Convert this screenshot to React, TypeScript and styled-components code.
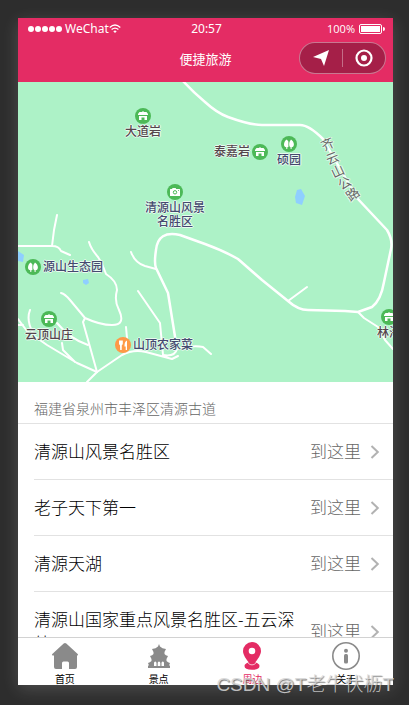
import React from "react";
import styled, { createGlobalStyle, css } from "styled-components";

const GlobalStyle = createGlobalStyle`
  *, *::before, *::after { box-sizing: border-box; }
  body {
    margin: 0;
    background: #2d2d2d;
    font-family: "Noto Sans", "Noto Sans CJK SC", sans-serif;
  }
  button { margin: 0; padding: 0; border: 0; background: none; font: inherit; color: inherit; cursor: pointer; }
`;

const Stage = styled.div`
  height: 100vh;
  padding: 18px 16px 20px 18px;
  position: relative;
  overflow: hidden;
`;

const Phone = styled.div`
  height: 100%;
  display: flex;
  flex-direction: column;
  background: #fff;
  box-shadow: 0 4px 16px 0 rgba(255, 255, 255, 0.16);
`;

const Header = styled.header`
  flex: none;
  background: #e42c64;
  color: #fff;
`;

const StatusBar = styled.div`
  display: grid;
  grid-template-columns: 1fr auto 1fr;
  align-items: center;
  height: 22px;
  padding: 0 8px 0 10px;
  font-size: 12px;
  line-height: 20px;
`;

const Carrier = styled.div`
  display: flex;
  align-items: center;
`;

const Dots = styled.span`
  display: flex;
  gap: 1px;
  margin-right: 3px;
`;

const Dot = styled.i`
  width: 6px;
  height: 6px;
  border-radius: 50%;
  background: #fff;
`;

const Power = styled.div`
  display: flex;
  align-items: center;
  justify-content: flex-end;
  gap: 4px;
  font-size: 11px;
  font-family: "Open Sans", sans-serif;
`;

const NavBar = styled.div`
  display: grid;
  grid-template-columns: 1fr auto 1fr;
  align-items: center;
  height: 42px;
  padding: 0 7px 6px;
`;

const Title = styled.h1`
  grid-column: 2;
  margin: 0;
  padding-top: 2px;
  font-size: 13px;
  line-height: 20px;
  font-weight: 400;
`;

const Capsule = styled.div`
  justify-self: end;
  display: flex;
  align-items: center;
  width: 87px;
  height: 32px;
  border: 1px solid rgba(255, 255, 255, 0.4);
  border-radius: 16px;
  background: #a51f48;
`;

const CapsuleButton = styled.button`
  flex: 1;
  height: 18px;
  display: flex;
  align-items: center;
  justify-content: center;
  & + & { border-left: 1px solid rgba(255, 255, 255, 0.35); }
`;

const Map = styled.section`
  position: relative;
  flex: none;
  height: 300px;
  overflow: hidden;
  background: #adf2c7;
`;

const Roads = styled.svg`
  display: block;
`;

const Pin = styled.div<{ $x: number; $y: number; $side?: "left" | "right" }>`
  position: absolute;
  left: ${(p) => p.$x}px;
  top: ${(p) => p.$y}px;
  display: flex;
  flex-direction: ${(p) => (p.$side === "right" ? "row" : p.$side === "left" ? "row-reverse" : "column")};
  align-items: center;
  gap: ${(p) => (p.$side ? 2 : 1)}px;
  svg { flex: none; display: block; }
`;

const outline = css`
  text-shadow: 1px 0 #e8fbef, -1px 0 #e8fbef, 0 1px #e8fbef, 0 -1px #e8fbef;
`;

const PinLabel = styled.span<{ $tone: string }>`
  ${outline}
  color: ${(p) => p.$tone};
  font-size: 12px;
  line-height: 14px;
  font-weight: 500;
  text-align: center;
  white-space: pre;
`;

const RoadGlyph = styled.span<{ $x: number; $y: number; $turn: number }>`
  ${outline}
  position: absolute;
  left: ${(p) => p.$x}px;
  top: ${(p) => p.$y}px;
  color: #666;
  font-size: 13px;
  line-height: 14px;
  transform: rotate(${(p) => p.$turn}deg);
`;

const Results = styled.main`
  flex: 1;
  min-height: 0;
  overflow: hidden;
`;

const Address = styled.h2`
  margin: 0;
  padding: 17px 16px 4px;
  font-size: 14px;
  line-height: 20px;
  font-weight: 300;
  color: #666;
  border-bottom: 1px solid #e2e2e2;
`;

const List = styled.ul`
  margin: 0;
  padding: 0;
  list-style: none;
`;

const Item = styled.li`
  margin-left: 16px;
  & + & { border-top: 1px solid #e2e2e2; }
`;

const Row = styled.button`
  display: flex;
  align-items: center;
  width: 100%;
  padding: 16px 13px 15px 0;
  font-size: 17px;
  line-height: 24px;
  font-weight: 300;
  text-align: left;
`;

const Place = styled.span`
  flex: 1;
  color: #000;
`;

const Go = styled.span`
  flex: none;
  display: flex;
  align-items: center;
  gap: 9px;
  padding-left: 9px;
  color: #666;
`;

const TabBar = styled.nav`
  flex: none;
  display: grid;
  grid-template-columns: repeat(4, 1fr);
  height: 48px;
  overflow: hidden;
  border-top: 1px solid #d2d2d2;
  background: #fff;
`;

const Tab = styled.button<{ $active?: boolean }>`
  display: flex;
  flex-direction: column;
  align-items: center;
  justify-content: flex-start;
  padding-top: 3px;
  font-size: 10px;
  line-height: 14px;
  color: ${(p) => (p.$active ? "#e42c64" : "#000")};
  svg { flex: none; display: block; margin-bottom: 1px; }
`;

const Watermark = styled.div`
  position: absolute;
  right: 15px;
  bottom: 6px;
  color: rgba(215, 215, 215, 0.85);
  font-family: "Liberation Sans", "Noto Sans CJK SC", sans-serif;
  font-size: 19px;
  line-height: 28px;
  font-weight: 300;
  white-space: nowrap;
  text-shadow: 1px 1px 1px rgba(60, 60, 60, 0.7);
  pointer-events: none;
`;

type Kind = "house" | "tree" | "camera" | "food";

const PinIcon = ({ kind }: { kind: Kind }) => (
  <svg width="16" height="16" viewBox="0 0 16 16" aria-hidden="true">
    <circle cx="8" cy="8" r="8" fill={kind === "food" ? "#ff9947" : "#4cb957"} />
    {kind === "house" && (
      <path d="M4.5 4H7v-.6h2V4h2.500L13 6v1H3V6zM4 8h8v4H9.500V9.600h-3V12H4z" fill="#fff" />
    )}
    {kind === "tree" && (
      <path d="M5.800 3.500C4.200 4.300 3 6.500 3 8.400c0 1.800 1 2.700 2.300 2.900V13h1v-1.700L7.400 11V5.500zM10 3.500C8.700 5 8.200 6.500 8.200 8.200c0 1.700.5 2.800 1.400 3.100V13h1v-1.700c1.400-.2 2.300-1.300 2.300-3.100C12.900 6.500 11.600 4.500 10 3.500z" fill="#fff" />
    )}
    {kind === "camera" && (
      <>
        <path d="M3.500 5H5l.6-1h3l.6 1h3.300q.5 0 .5.500v6q0 .5-.5.500h-9q-.5 0-.5-.5v-6q0-.5.5-.5z" fill="#fff" />
        <circle cx="8" cy="8.300" r="1.700" fill="none" stroke="#4cb957" />
        <circle cx="11.500" cy="6.500" r=".5" fill="#4cb957" />
      </>
    )}
    {kind === "food" && (
      <path d="M4 3.500h3.800v3.300q0 1-1 1.400L6.700 13H5.200L5 8.200q-1-.4-1-1.400zM9.500 8.500Q9.500 4.500 12 3.500V13h-1.300V9.500H9.500z" fill="#fff" />
    )}
  </svg>
);

const NAVY = "#45496f";
const BROWN = "#55454c";

const pins: { x: number; y: number; kind: Kind; text: string; tone: string; side?: "left" | "right" }[] = [
  { x: 107, y: 26, kind: "house", text: "大道岩", tone: BROWN },
  { x: 196, y: 62, kind: "house", text: "泰嘉岩", tone: BROWN, side: "left" },
  { x: 259, y: 54, kind: "tree", text: "硕园", tone: NAVY },
  { x: 127, y: 102, kind: "camera", text: "清源山风景\n名胜区", tone: NAVY },
  { x: 7, y: 177, kind: "tree", text: "源山生态园", tone: NAVY, side: "right" },
  { x: 7, y: 229, kind: "house", text: "云顶山庄", tone: BROWN },
  { x: 97, y: 255, kind: "food", text: "山顶农家菜", tone: NAVY, side: "right" },
  { x: 359, y: 227, kind: "house", text: "林海", tone: BROWN },
];

const roadName = [
  { c: "齐", x: 303, y: 55, turn: -25 },
  { c: "云", x: 308, y: 69, turn: -22 },
  { c: "山", x: 313, y: 82, turn: -25 },
  { c: "公", x: 320, y: 94, turn: -30 },
  { c: "路", x: 328, y: 105, turn: -36 },
];

const places = ["清源山风景名胜区", "老子天下第一", "清源天湖", "清源山国家重点风景名胜区-五云深处"];

const MapRoads = () => (
  <Roads width="375" height="300" viewBox="0 0 375 300" aria-hidden="true">
    <g fill="#8fcfff">
      <path d="M0 169l6 4-1 7-5-1zM65 198l5-1 1 4-3 2-3-2zM279 108l4-1 4 7-3 9-6-2-1-6z" />
    </g>
    <g fill="none" stroke="#fff" strokeWidth="2" strokeLinecap="round" strokeLinejoin="round">
      <path d="M0 164H34Q41 164 43 169L52 173M34 164L36 148L39 133" />
      <path d="M71 160Q73 167 80 175Q84 181 88 192Q99 199 99 208Q96 219 101 228Q108 243 94 243Q82 243 67 236L52 218Q47 212 43 211M67 236L65 240L79 290" />
      <path d="M113 170Q117 181 127 184L138 187M120 209L142 241L145 273" />
      <path d="M12 228Q8 238 15 251M0 237L9 249L29 263L59 281L79 290M0 243H5M39 241Q52 257 70 263M44 261L45 268L57 280M108 245L109 256" />
      <path d="M69 300L79 290L104 273Q115 267 128 270L154 277L160 274M145 273Q157 275 159 267Q175 263 185 265L193 272" />
      <path d="M270 219L289 205M340 230L346 236L360 245L367 258L375 267" />
      <path strokeWidth="2.500" d="M164 -2Q175 10 187 20Q199 31 210 35Q232 43 244 43H282Q291 43 305 57L339 116L369 148Q375 158 373 167L366 200Q363 218 354 225L340 230L327 229L290 228Q280 228 270 219L244 198L220 177Q206 169 187 162L162 153Q140 148 138 168Q136 181 138 186L150 211L159 267" />
    </g>
  </Roads>
);

const WifiIcon = () => (
  <svg width="12" height="10" viewBox="0 0 12 10" fill="none" stroke="#fff" strokeWidth="1.300" aria-hidden="true">
    <path d="M.7 3.400Q6-1.300 11.300 3.400M2.600 5.600Q6 2.600 9.400 5.600" />
    <path d="M4.300 7.300Q6 5.700 7.700 7.300L6 9z" fill="#fff" stroke="none" />
  </svg>
);

const BatteryIcon = () => (
  <svg width="26" height="10" viewBox="0 0 26 10" aria-hidden="true">
    <rect x=".5" y=".5" width="22" height="9" rx="1.500" fill="none" stroke="#fff" />
    <rect x="2" y="2" width="19" height="6" fill="#fff" />
    <path d="M24 3q2 0 2 2t-2 2z" fill="#fff" />
  </svg>
);

const Chevron = () => (
  <svg width="10" height="14" viewBox="0 0 10 14" fill="none" stroke="#b2b2b2" strokeWidth="2" aria-hidden="true">
    <path d="M1.500 1L7.800 7L1.500 13" />
  </svg>
);

const HomeIcon = () => (
  <svg width="28" height="30" viewBox="0 0 28 30" fill="#8a8a8a" aria-hidden="true">
    <path d="M12.700 2.600q1.300-1.200 2.600 0L26.700 13q1 1.200-.4 1.500H26V26q0 2-2 2h-6v-6q0-1.500-1.500-1.500h-4Q11 20.500 11 22v6H5q-2 0-2-2V14.500h-1.300q-1.400-.3-.4-1.500z" />
  </svg>
);

const PagodaIcon = () => (
  <svg width="26" height="30" viewBox="0 0 26 30" fill="#8a8a8a" aria-hidden="true">
    <path d="M13 3l1 2.500q2 2 6 2.500l-1.500 3v2q1 1.500 3.500 2L20.500 18v2q1.500 1.500 3.500 2l-1 2.500h1v2.500H2v-2.500h1L2 22q2-.5 3.500-2v-2L4 15q2.500-.5 3.500-2v-2L6 8q4-.5 6-2.500z" />
    <path d="M8 25v-3q0-1.500 1.200-1.500T10.500 22v3zM11.700 25v-3q0-1.500 1.300-1.500t1.300 1.500v3zM15.500 25v-3q0-1.500 1.300-1.500T18 22v3z" fill="#fff" />
  </svg>
);

const PlaceIcon = () => (
  <svg width="20" height="30" viewBox="0 0 20 30" fill="#e42c64" aria-hidden="true">
    <path fillRule="evenodd" d="M10 1a9 9 0 0 1 9 9C19 14 15.500 18.500 13.200 21.500Q17.500 22.500 17.500 25Q17.500 28.800 10 28.800T2.500 25Q2.500 22.500 6.800 21.500C4.500 18.500 1 14 1 10A9 9 0 0 1 10 1zm0 5.700a3.300 3.300 0 1 0 0 6.600 3.300 3.300 0 0 0 0-6.600z" />
    <path d="M6.200 22.300Q10 25.500 13.800 22.300" fill="none" stroke="#fff" strokeWidth=".7" />
  </svg>
);

const AboutIcon = () => (
  <svg width="30" height="30" viewBox="0 0 30 30" aria-hidden="true">
    <circle cx="15" cy="15" r="13.200" fill="none" stroke="#8a8a8a" strokeWidth="1.600" />
    <circle cx="15" cy="9.700" r="2" fill="#8a8a8a" />
    <rect x="13" y="13" width="4" height="9.500" rx="1.500" fill="#8a8a8a" />
  </svg>
);

export default function App() {
  return (
    <>
      <GlobalStyle />
      <Stage>
        <Phone>
          <Header>
            <StatusBar>
              <Carrier>
                <Dots>
                  {[0, 1, 2, 3, 4].map((n) => (
                    <Dot key={n} />
                  ))}
                </Dots>
                <span>WeChat</span>
                <WifiIcon />
              </Carrier>
              <span>20:57</span>
              <Power>
                <span>100%</span>
                <BatteryIcon />
              </Power>
            </StatusBar>
            <NavBar>
              <Title>便捷旅游</Title>
              <Capsule>
                <CapsuleButton aria-label="定位">
                  <svg width="18" height="18" viewBox="0 0 18 18" fill="#fff" aria-hidden="true">
                    <path d="M17 1L12 17L9 10L1 8z" />
                  </svg>
                </CapsuleButton>
                <CapsuleButton aria-label="关闭">
                  <svg width="18" height="18" viewBox="0 0 18 18" aria-hidden="true">
                    <circle cx="9" cy="9" r="7.500" fill="none" stroke="#fff" strokeWidth="2.200" />
                    <circle cx="9" cy="9" r="3" fill="#fff" />
                  </svg>
                </CapsuleButton>
              </Capsule>
            </NavBar>
          </Header>
          <Map aria-label="地图">
            <MapRoads />
            {roadName.map((g) => (
              <RoadGlyph key={g.c} $x={g.x} $y={g.y} $turn={g.turn}>
                {g.c}
              </RoadGlyph>
            ))}
            {pins.map((p) => (
              <Pin key={p.text} $x={p.x} $y={p.y} $side={p.side}>
                <PinIcon kind={p.kind} />
                <PinLabel $tone={p.tone}>{p.text}</PinLabel>
              </Pin>
            ))}
          </Map>
          <Results>
            <Address>福建省泉州市丰泽区清源古道</Address>
            <List>
              {places.map((name) => (
                <Item key={name}>
                  <Row>
                    <Place>{name}</Place>
                    <Go>
                      到这里
                      <Chevron />
                    </Go>
                  </Row>
                </Item>
              ))}
            </List>
          </Results>
          <TabBar>
            <Tab>
              <HomeIcon />
              首页
            </Tab>
            <Tab>
              <PagodaIcon />
              景点
            </Tab>
            <Tab $active aria-current="page">
              <PlaceIcon />
              周边
            </Tab>
            <Tab>
              <AboutIcon />
              关于
            </Tab>
          </TabBar>
        </Phone>
        <Watermark>CSDN @T老牛伏枥T</Watermark>
      </Stage>
    </>
  );
}
